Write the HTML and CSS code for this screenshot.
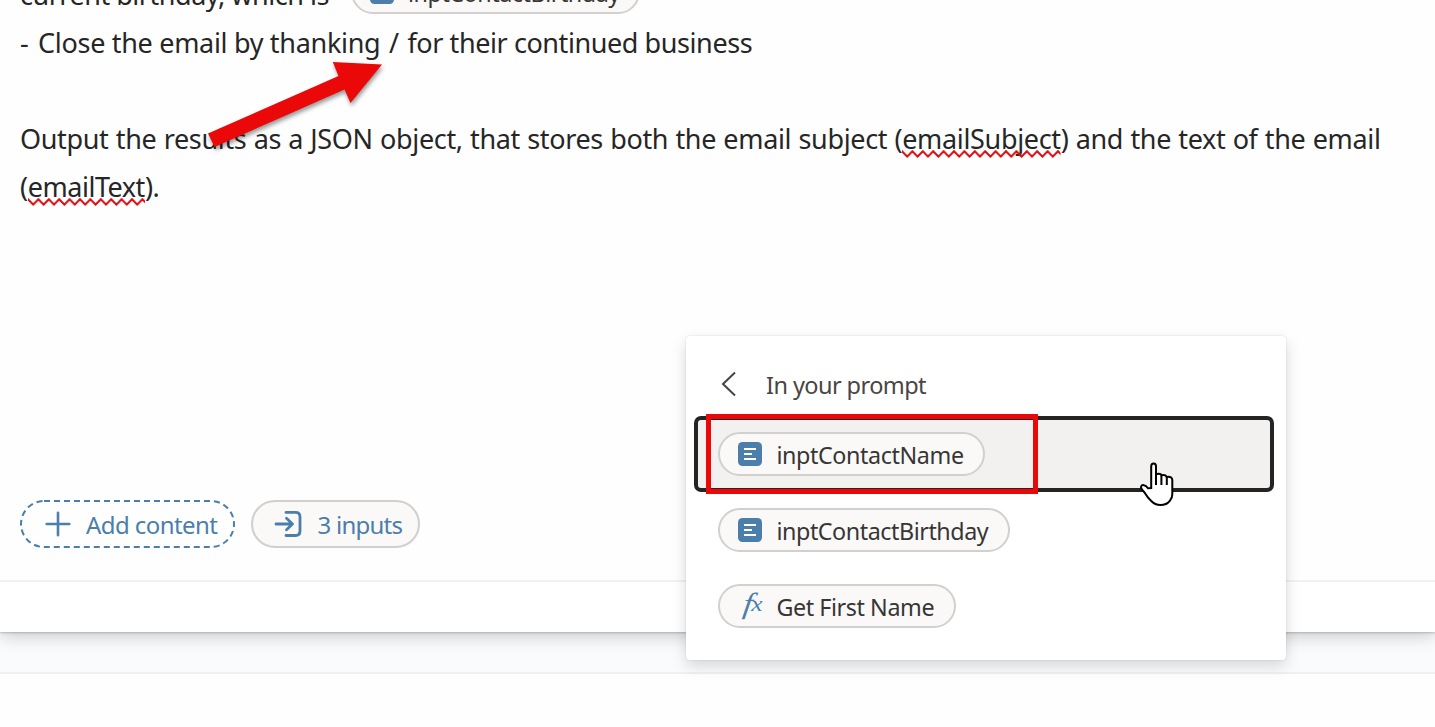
FILE: index.html
```html
<!DOCTYPE html>
<html lang="en">
<head>
<meta charset="utf-8">
<title>Prompt editor</title>
<link rel="stylesheet" href="styles.css">
</head>
<body>
<svg class="defs" width="0" height="0">
  <symbol id="field" viewBox="0 0 24 24"><rect width="24" height="24" rx="4.5" fill="#4b7eab"/><path d="M6 7h12M6 12h8M6 17h12" stroke="#fff" stroke-width="2"/></symbol>
  <pattern id="wave" width="10.4" height="8" patternUnits="userSpaceOnUse"><path d="M-5.2 6.6L0 1.2L5.2 6.6L10.4 1.2L15.6 6.6" fill="none" stroke="#dd0b10" stroke-width="2"/></pattern>
</svg>
<main class="page">
  <section class="editor">
    <div class="prompt">
      <div class="line first"><span class="t1">current birthday, which is</span><span class="chip inline"><svg class="icon"><use href="#field"/></svg><span class="birthday">inptContactBirthday</span></span></div>
      <div class="line"><span class="t2"><span class="dash">-</span> Close the email by thanking <span class="slash">/</span> <span class="tail">for their continued business</span></span></div>
      <div class="line"></div>
      <div class="line"><span class="t3">Output the results as a JSON object, that stores both the email subject (<span class="typo">emailSubject<svg class="squiggle"><rect width="100%" height="8" fill="url(#wave)"/></svg></span>) and the text of the email</span></div>
      <div class="line"><span class="t4">(<span class="typo">emailText<svg class="squiggle"><rect width="100%" height="8" fill="url(#wave)"/></svg></span>).</span></div>
    </div>
    <div class="actions">
      <button class="action add"><svg class="outline" width="215" height="48"><rect x="1" y="1" width="213" height="46" rx="23" fill="none" stroke="#4b7eab" stroke-width="2" stroke-dasharray="6 4"/></svg><svg width="26" height="26" viewBox="0 0 26 26"><path d="M13 1.7V24.3M1.7 13H24.3" stroke="#4b7eab" stroke-width="2.6" stroke-linecap="round"/></svg><span class="addtext">Add content</span></button>
      <button class="action inputs"><svg width="28" height="28" viewBox="0 0 28 28" fill="none" stroke="#4b7eab" stroke-width="2.8" stroke-linecap="round" stroke-linejoin="round"><path d="M12 2.4H21.5Q26 2.4 26 6.9V21Q26 25.5 21.5 25.5H12M2 14H17.5M12.5 8.3L18.5 14L12.5 19.7"/></svg><span class="inputtext">3 inputs</span></button>
    </div>
  </section>
  <div class="footer"></div>
  <div class="gap"></div>
  <div class="rest"></div>
</main>

<aside class="menu">
  <header class="menuhead"><svg width="16" height="26" viewBox="0 0 16 26"><path d="M14 1.5L2 13L14 24.5" fill="none" stroke="#444" stroke-width="2"/></svg><span class="heading">In your prompt</span></header>
  <div class="option active"><span class="chip"><svg class="icon"><use href="#field"/></svg><span class="name">inptContactName</span></span></div>
  <div class="option"><span class="chip"><svg class="icon"><use href="#field"/></svg><span class="birthday">inptContactBirthday</span></span></div>
  <div class="option"><span class="chip"><svg class="icon fx"><text transform="translate(4.2 19) skewX(-8) scale(1.15 1)" font-size="29">f</text><text transform="translate(13.2 17) scale(1.15 1)" font-size="22">x</text></svg><span class="getname">Get First Name</span></span></div>
</aside>
<div class="highlight"></div>
<svg class="arrow" width="200" height="110" viewBox="0 0 200 110"><path d="M8 83.5L138.5 26L132.8 12L182 14.5L150.5 53L144.5 39.5L14.5 97Z" fill="#ea0808"/></svg>
<svg class="cursor" width="36" height="46" viewBox="0 0 36 46"><path d="M11.2 28V6.5Q11.2 3.5 13.6 3.5Q16 3.5 16 6.5V14.5Q17 13.8 18.8 13.8Q21 13.8 21.5 15.2Q25.5 14.5 26.8 17Q32.3 16.2 32.3 20V34.5Q32.3 38 29.8 40.8Q26.5 45 20.5 45Q15 45 11 40.8Q7.5 37.5 4.5 32.5Q1.5 29.7 1 27.5Q1 24.5 4 25.2Q6 25.3 8 28.3Z" fill="#fff" stroke="#000" stroke-width="2"/><path d="M16 14V25M21.4 15V25M26.8 17V25" stroke="#000" stroke-width="2"/></svg>
</body>
</html>
```
FILE: styles.css
```css
* { box-sizing: border-box; }
body {
  margin: 0;
  width: 1435px;
  height: 727px;
  overflow: hidden;
  position: relative;
  background: #fefefe;
  color: #262626;
  font-family: "Noto Sans", sans-serif;
}
.defs { position: absolute; }
.page { display: flex; flex-direction: column; height: 727px; overflow: hidden; }
.editor {
  height: 582px;
  flex: none;
  overflow: hidden;
  border-bottom: 2px solid #f1f1f1;
  padding: 0 20px;
  display: flex;
  flex-direction: column;
  justify-content: space-between;
  position: relative;
  z-index: 2;
  background: #fefefe;
}
.prompt { margin-top: -29px; font-size: 27px; line-height: 48px; white-space: nowrap; }
.line { height: 48px; display: flex; align-items: center; }
.first { gap: 20px; }
.t1 { width: 311px; flex: none; letter-spacing: -0.48px; }
.t2 { letter-spacing: -0.31px; }
.dash { margin-right: 3px; }
.slash { margin: 0 2px; }
.tail { letter-spacing: -0.42px; }
.t3 { letter-spacing: -0.34px; word-spacing: 0.57px; }
.t4 { letter-spacing: -0.46px; }
.typo { position: relative; display: inline-block; }
.squiggle { position: absolute; left: 0; top: 34.5px; width: 100%; height: 8px; }
.chip {
  display: inline-flex;
  align-items: center;
  gap: 14.5px;
  height: 44px;
  padding: 0 19.5px 0 18px;
  border: 2px solid #d1d0cf;
  border-radius: 22px;
  background: #faf9f8;
  color: #373635;
  font-size: 23.3px;
  line-height: 40px;
  white-space: nowrap;
}
.chip > span { position: relative; top: 1px; }
.chip.inline { margin-top: -6px; padding: 0 18px 0 16.5px; }
.name { letter-spacing: -0.4px; }
.birthday { letter-spacing: -0.45px; }
.getname { letter-spacing: -0.43px; }
.icon { width: 24px; height: 24px; flex: none; overflow: visible; }
.fx { font-family: "Liberation Serif", serif; font-style: italic; fill: #4b7eab; }
.actions { display: flex; gap: 16px; margin-bottom: 32px; }
.action {
  height: 48px;
  display: flex;
  align-items: center;
  border: 0;
  border-radius: 24px;
  background: none;
  padding: 0;
  color: #4b7eab;
  font: 24px "Noto Sans", sans-serif;
  white-space: nowrap;
}
.add { width: 215px; padding-left: 25px; gap: 15px; position: relative; }
.outline { position: absolute; left: 0; top: 0; }
.inputs { width: 169px; padding-left: 21px; gap: 15.5px; border: 2px solid #d1d0cf; background: #faf9f8; }
.addtext { letter-spacing: -0.57px; }
.inputtext { letter-spacing: -0.75px; }
.footer { height: 50px; flex: none; background: #fff; box-shadow: 0 1px 2px #0003, 0 4px 18px #0003; position: relative; z-index: 1; }
.gap { height: 42px; flex: none; background: #fafbfd; border-bottom: 2px solid #f0f0f0; }
.rest { flex: 1; background: #fefefe; position: relative; z-index: 2; }
.menu {
  position: absolute;
  z-index: 3;
  left: 686px;
  top: 336px;
  width: 600px;
  height: 324px;
  border-radius: 4px;
  background: #fff;
  box-shadow: 0 0 2px #0002, 0 6px 15px #00000026;
  padding: 0 12px 0 8px;
}
.menuhead { height: 80px; padding: 16px 0 0 27px; display: flex; align-items: center; gap: 29px; color: #484644; font-size: 23.5px; white-space: nowrap; }
.menuhead svg { flex: none; }
.heading { position: relative; top: 1px; letter-spacing: -0.57px; }
.option { height: 76px; display: flex; align-items: center; padding-left: 24px; border-radius: 7px; }
.active { border: 4px solid #242424; padding-left: 20px; background: #f3f1ef; }
.highlight { position: absolute; z-index: 4; left: 706px; top: 414px; width: 332px; height: 80px; border: 5px solid #ea0808; }
.arrow { position: absolute; z-index: 4; left: 200px; top: 50px; filter: drop-shadow(1px 3px 2px #0006); }
.cursor { position: absolute; z-index: 5; left: 1140px; top: 460px; }
```
